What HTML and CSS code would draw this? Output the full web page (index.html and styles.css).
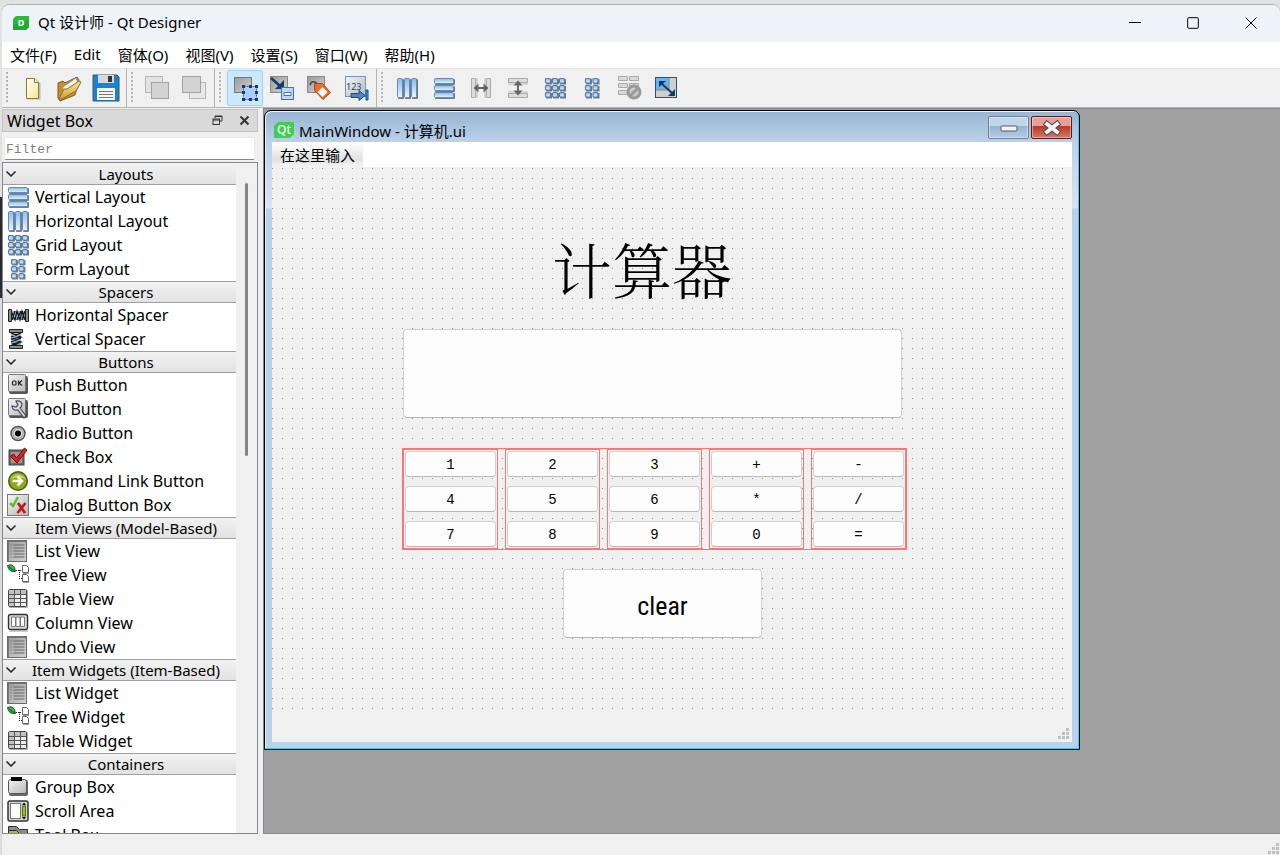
FILE: index.html
```html
<!DOCTYPE html>
<html lang="zh-CN">
<head>
  <meta charset="UTF-8" />
  <meta name="viewport" content="width=device-width, initial-scale=1.0" />
  <title>Qt 设计师 - Qt Designer</title>
  <link rel="stylesheet" href="styles.css">
</head>
<body>

<svg class="defs" aria-hidden="true">
  <defs>
    <linearGradient id="blue" x1="0" y1="0" x2="0" y2="1">
      <stop offset="0" stop-color="#7cc0ee" /><stop offset="1" stop-color="#e6f5ff" />
    </linearGradient>
    <linearGradient id="grey" x1="0" y1="0" x2="1" y2="1">
      <stop offset="0" stop-color="#9a9a9a" /><stop offset="1" stop-color="#d2d2d2" />
    </linearGradient>
    <linearGradient id="light" x1="0" y1="0" x2="1" y2="1">
      <stop offset="0" stop-color="#f4f4f4" /><stop offset="1" stop-color="#b8b8b8" />
    </linearGradient>
    <linearGradient id="paper" x1="0" y1="0" x2="1" y2="1">
      <stop offset="0" stop-color="#ffffff" /><stop offset="1" stop-color="#f7e889" />
    </linearGradient>
    <linearGradient id="gold" x1="0" y1="0" x2="0" y2="1">
      <stop offset="0" stop-color="#f7e3a0" /><stop offset="1" stop-color="#d39a2c" />
    </linearGradient>

    <symbol id="i-vbox" viewBox="0 0 22 22">
      <g fill="#3c4656" opacity=".7"><rect x="2" y="2" width="20" height="6" rx="1" /><rect x="2" y="9" width="20" height="6" rx="1" /><rect x="2" y="16" width="20" height="6" rx="1" /></g>
      <g fill="url(#blue)" stroke="#6d87ad"><rect x="1.500" y="1.500" width="19" height="5" rx="1" /><rect x="1.500" y="8.500" width="19" height="5" rx="1" /><rect x="1.500" y="15.500" width="19" height="5" rx="1" /></g>
    </symbol>
    <symbol id="i-hbox" viewBox="0 0 22 22">
      <g fill="#3c4656" opacity=".7"><rect x="2" y="2" width="6" height="20" rx="1" /><rect x="9" y="2" width="6" height="20" rx="1" /><rect x="16" y="2" width="6" height="20" rx="1" /></g>
      <g fill="url(#blue)" stroke="#6d87ad"><rect x="1.500" y="1.500" width="5" height="19" rx="1" /><rect x="8.500" y="1.500" width="5" height="19" rx="1" /><rect x="15.500" y="1.500" width="5" height="19" rx="1" /></g>
    </symbol>
    <symbol id="i-grid" viewBox="0 0 22 22">
      <path d="M2 2h6v5.500H2zM9 2h6v5.500H9zM16 2h6v5.500h-6zM2 9h6v5.500H2zM9 9h6v5.500H9zM16 9h6v5.500h-6zM2 16h6v5.500H2zM9 16h6v5.500H9zM16 16h6v5.500h-6z" fill="#3c4656" opacity=".7" />
      <g fill="url(#blue)" stroke="#5f7aa3" stroke-width="1.200">
        <rect x="1.500" y="1.500" width="5" height="4.500" rx="1" /><rect x="8.500" y="1.500" width="5" height="4.500" rx="1" /><rect x="15.500" y="1.500" width="5" height="4.500" rx="1" />
        <rect x="1.500" y="8.500" width="5" height="4.500" rx="1" /><rect x="8.500" y="8.500" width="5" height="4.500" rx="1" /><rect x="15.500" y="8.500" width="5" height="4.500" rx="1" />
        <rect x="1.500" y="15.500" width="5" height="4.500" rx="1" /><rect x="8.500" y="15.500" width="5" height="4.500" rx="1" /><rect x="15.500" y="15.500" width="5" height="4.500" rx="1" />
      </g>
    </symbol>
    <symbol id="i-form" viewBox="0 0 22 22">
      <path d="M5 2h6v5.500H5zM12.500 2h6v5.500h-6zM5 9h6v5.500H5zM12.500 9h6v5.500h-6zM5 16h6v5.500H5zM12.500 16h6v5.500h-6z" fill="#3c4656" opacity=".7" />
      <g fill="url(#blue)" stroke="#5f7aa3" stroke-width="1.200">
        <rect x="4.500" y="1.500" width="5" height="4.500" rx="1" /><rect x="12" y="1.500" width="5" height="4.500" rx="1" />
        <rect x="4.500" y="8.500" width="5" height="4.500" rx="1" /><rect x="12" y="8.500" width="5" height="4.500" rx="1" />
        <rect x="4.500" y="15.500" width="5" height="4.500" rx="1" /><rect x="12" y="15.500" width="5" height="4.500" rx="1" />
      </g>
    </symbol>
    <symbol id="i-list" viewBox="0 0 22 22">
      <rect x="0.500" y="0.500" width="19" height="21" fill="url(#grey)" stroke="#6a6a6a" />
      <path d="M1 1.500h18M1.500 1v20" stroke="#777" />
      <path d="M3.500 5h1M3.500 8h1M3.500 11h1M3.500 14h1M3.500 17h1M6.500 5h11M6.500 8h11M6.500 11h11M6.500 14h11M6.500 17h11" stroke="#666" />
    </symbol>
    <symbol id="i-tree" viewBox="0 0 22 22">
      <path d="M0.500 1.500q5-2 7 2l1 4q-7 1-8-6z" fill="#35b04a" stroke="#145c22" />
      <path d="M2 3l6 4.500" stroke="#145c22" />
      <path d="M9 6.500h6M12.500 6v9M12 14.500h4" stroke="#222" stroke-dasharray="1 1" fill="none" />
      <path d="M15.500 1.500h4l2 2v5h-6zM15.500 10.500h4l2 2v5h-6z" fill="#fff" stroke="#666" />
      <path d="M16 9.500h6M16 18.500h6" stroke="#999" />
    </symbol>
    <symbol id="i-table" viewBox="0 0 22 22">
      <rect x="2" y="2" width="19" height="18" rx="1" fill="#777" opacity=".6" />
      <rect x="1.500" y="1.500" width="18" height="17" rx="1" fill="#eeeeee" stroke="#444" />
      <path d="M2 2h17v4H2zM2 6h5v12H2z" fill="#c2c2c2" />
      <path d="M2 6.500h17M2 10.500h17M2 14.500h17M7.500 2v16M13.500 2v16" stroke="#555" />
    </symbol>
    <symbol id="i-column" viewBox="0 0 22 22">
      <rect x="1.500" y="2.500" width="19" height="15" rx="2" fill="#dedede" stroke="#333" stroke-width="1.400" />
      <path d="M4.500 5h4v9.500h-4zM9 5h4v9.500H9zM13.500 5h4v9.500h-4z" fill="#fff" stroke="#777" />
      <path d="M2 19h19" stroke="#999" />
    </symbol>
    <symbol id="i-hspacer" viewBox="0 0 22 22">
      <path d="M4 7h14v9H4z" fill="#8fb0b8" />
      <path d="M4 7l4 9 2-9 3 9 2-9 3 9M5 16l3-9M10 16l4-9M15 16l3-9" fill="none" stroke="#10181c" stroke-width="1.200" />
      <path d="M1.500 5.500h3v12h-3zM18.500 5.500h3v12h-3z" fill="#8c8c8c" stroke="#222" />
    </symbol>
    <symbol id="i-vspacer" viewBox="0 0 22 22">
      <path d="M4 4h10v14H4z" fill="#8fb0b8" />
      <path d="M4 5l10 4-10 2 10 3-9 2 9 2M14 5L4 9M14 10l-10 4M14 14l-10 4" fill="none" stroke="#10181c" stroke-width="1.200" />
      <path d="M2.500 1.500h13v3h-13zM2.500 17.500h13v3h-13z" fill="#8c8c8c" stroke="#222" />
    </symbol>
    <symbol id="i-push" viewBox="0 0 22 22">
      <rect x="2" y="2" width="19" height="18" rx="2" fill="#555" />
      <rect x="1.500" y="0.500" width="17" height="17" rx="1" fill="url(#light)" stroke="#777" />
      <g fill="none" stroke="#222" stroke-width="1.200"><rect x="5.500" y="7" width="3.500" height="4" rx="1" /><path d="M11.500 6.500v5M15 6.500l-3 2.500 3 2.500" /></g>
    </symbol>
    <symbol id="i-tool" viewBox="0 0 22 22">
      <rect x="2" y="2" width="19" height="18" rx="2" fill="#555" />
      <rect x="1.500" y="0.500" width="17" height="17" rx="1" fill="url(#light)" stroke="#777" />
      <path d="M9 3q5-1 6 3 0 3-2 4l6 8-2 2-6-8q-6 1-6-4l4 1 2-2z" fill="#d9dce2" stroke="#444c5a" stroke-width="1.200" />
    </symbol>
    <symbol id="i-radio" viewBox="0 0 22 22">
      <circle cx="11" cy="11.500" r="7" fill="#c9c9c9" stroke="#555" stroke-width="1.500" />
      <circle cx="11" cy="11.500" r="5" fill="#ddd" stroke="#999" /><circle cx="11" cy="11.500" r="3" fill="#000" />
    </symbol>
    <symbol id="i-check" viewBox="0 0 22 22">
      <rect x="2" y="4" width="15" height="15" fill="#6a6a6a" stroke="#444" />
      <rect x="4" y="6" width="11" height="11" fill="#999" />
      <path d="M3.500 10.500l3-2.500 3 4 8-10 2.500 2-10 13z" fill="#e02020" stroke="#7a0808" />
    </symbol>
    <symbol id="i-command" viewBox="0 0 22 22">
      <circle cx="11" cy="11" r="9.300" fill="#8aac18" stroke="#4c5f10" stroke-width="1.500" />
      <path d="M3.500 9a8 7 0 0115 0q-7-3-15 0z" fill="#bcd260" />
      <path d="M5.500 11h9M10.500 6.500l4.500 4.500-4.500 4.500" fill="none" stroke="#fff" stroke-width="2.500" />
    </symbol>
    <symbol id="i-dialog" viewBox="0 0 22 22">
      <rect x="0.500" y="0.500" width="21" height="21" fill="url(#light)" stroke="#777" />
      <path d="M3 9l3 3 5-9" fill="none" stroke="#5fbf2c" stroke-width="2.500" />
      <path d="M11 9l7 10M18.500 9l-8 10" stroke="#c4161c" stroke-width="2.700" />
    </symbol>
    <symbol id="i-group" viewBox="0 0 22 22">
      <rect x="2" y="4" width="19" height="16" rx="2" fill="#666" />
      <rect x="1.500" y="3.500" width="18" height="14" rx="2" fill="url(#light)" stroke="#555" />
      <rect x="4" y="1" width="11" height="4" fill="#000" />
    </symbol>
    <symbol id="i-scroll" viewBox="0 0 22 22">
      <rect x="1" y="1" width="20" height="20" rx="2" fill="#d7d7d7" stroke="#333" stroke-width="1.500" />
      <rect x="3.500" y="3.500" width="10" height="15" fill="#fff" stroke="#777" />
      <rect x="15.500" y="6" width="3" height="10" fill="#a2c520" stroke="#54680c" />
      <path d="M17 2.500l2 2.500h-4zM17 19.500l2-2.500h-4z" />
    </symbol>
    <symbol id="i-toolbox" viewBox="0 0 22 22">
      <path d="M1.500 2.500h8l3 3h8v5h-19z" fill="#8b8b8b" stroke="#333" />
      <path d="M1.500 6.500h8l3 3h8v5h-19z" fill="#a2b45e" stroke="#333" />
    </symbol>
  </defs>
</svg>

<div class="window">
  <header class="titlebar">
    <svg class="logo" viewBox="0 0 16 14"><path d="M3 0h13v11l-3 3H0V3z" fill="#2cb940" /><path d="M0 9l16-5v7l-3 3H0z" fill="#1ea834" /><text x="8" y="10" text-anchor="middle">D</text></svg>
    <h1>Qt 设计师 - Qt Designer</h1>
    <div class="win-buttons">
      <button aria-label="Minimize"><svg viewBox="0 0 12 12"><path d="M0 5.500h12" /></svg></button>
      <button aria-label="Maximize"><svg viewBox="0 0 12 12"><rect x="0.700" y="0.700" width="10.600" height="10.600" rx="1" /></svg></button>
      <button aria-label="Close"><svg viewBox="0 0 12 12"><path d="M0.500 0.500l11 11M11.500 0.500l-11 11" /></svg></button>
    </div>
  </header>

  <nav class="menubar">
    <button>文件(F)</button>
    <button>Edit</button>
    <button>窗体(O)</button>
    <button>视图(V)</button>
    <button>设置(S)</button>
    <button>窗口(W)</button>
    <button>帮助(H)</button>
  </nav>

  <div class="toolbars">
    <div class="toolbar">
      <span class="handle"></span>
      <button aria-label="New"><svg viewBox="0 0 28 28"><path d="M9.500 5.500h9l4 4v16h-13z" fill="#888" opacity=".5" /><path d="M8.500 4.500h8l4 4v16h-12z" fill="url(#paper)" stroke="#8c7a3c" /><path d="M16.500 4.500v4h4" fill="#fff" stroke="#8c7a3c" /></svg></button>
      <button aria-label="Open"><svg viewBox="0 0 28 28"><path d="M3 9l5-2 2 2 12-6 2 3-4 15-15 6-2-3z" fill="#c58f2d" stroke="#7d5d1f" /><path d="M8 13L21 4l2 5-15 9z" fill="#f8f8f0" stroke="#a0a08c" /><path d="M4 25l5-10 3 0 12-8 2 1-5 9L5 26z" fill="url(#gold)" stroke="#8d6a23" /></svg></button>
      <button aria-label="Save"><svg viewBox="0 0 28 28"><path d="M1 1h24l2 2v24H1z" fill="#1583d6" stroke="#46545f" /><rect x="6" y="1" width="16" height="8" fill="#d5d9dd" /><rect x="16" y="2" width="4" height="6" fill="#333" /><rect x="5" y="14" width="18" height="12" fill="#f5f5f5" /><path d="M7 17.500h14M7 20.500h14M7 23.500h14" stroke="#777" /></svg></button>
    </div>
    <div class="toolbar">
      <span class="handle"></span>
      <button aria-label="Send to Back" disabled><svg viewBox="0 0 28 28"><rect x="2.500" y="2.500" width="17" height="16" fill="#e2e2e2" stroke="#b5b5b5" /><rect x="8.500" y="8.500" width="17" height="16" fill="#d3d3d3" stroke="#a2a2a2" /></svg></button>
      <button aria-label="Bring to Front" disabled><svg viewBox="0 0 28 28"><rect x="9.500" y="8.500" width="16" height="16" fill="#e8e8e8" stroke="#b5b5b5" /><rect x="2.500" y="2.500" width="18" height="16" fill="#d3d3d3" stroke="#a2a2a2" /></svg></button>
    </div>
    <div class="toolbar">
      <span class="handle"></span>
      <button class="active" aria-label="Edit Widgets"><svg viewBox="0 0 28 28"><rect x="3.500" y="3.500" width="17" height="15" fill="url(#grey)" stroke="#777" /><rect x="12.500" y="12.500" width="13" height="13" fill="#a9cdff" stroke="#32639b" stroke-dasharray="2 1" /><path d="M11 11h3v3h-3zM18 11h3v3h-3zM24 11h3v3h-3zM11 17h3v3h-3zM24 17h3v3h-3zM11 24h3v3h-3zM18 24h3v3h-3zM24 24h3v3h-3z" fill="#1c3768" /></svg></button>
      <button aria-label="Edit Signals/Slots"><svg viewBox="0 0 28 28"><rect x="2.500" y="2.500" width="17" height="16" fill="url(#grey)" stroke="#888" /><path d="M3 4l9 8" stroke="#143b63" stroke-width="2.500" /><path d="M16 6v9H7z" fill="#143b63" /><rect x="13.500" y="13.500" width="12" height="12" fill="#bcd7ff" stroke="#4a6db0" /><path d="M16 18.500h7v3h-7z" fill="#fff" stroke="#4a6db0" /></svg></button>
      <button aria-label="Edit Buddies"><svg viewBox="0 0 28 28"><rect x="2.500" y="2.500" width="17" height="16" fill="url(#grey)" stroke="#888" /><path d="M5 11q2-6 8-1" fill="none" stroke="#444" stroke-width="1.500" /><path d="M9.500 9.500l8 0 8 9-7.500 7-8.500-9z" fill="#f06a22" stroke="#a84a10" /><path d="M17.500 13l5 5-5 5-5-5z" fill="#fff" /></svg></button>
      <button aria-label="Edit Tab Order"><svg viewBox="0 0 28 28"><rect x="3.500" y="2.500" width="20" height="20" fill="url(#light)" stroke="#7794b8" /><text class="tab-num" x="4" y="16">123</text><path d="M9 19.500h8v-3l6 5-6 5v-3H9z" fill="#4a86c8" stroke="#1a4a8a" /><path d="M24 16h2v10h-2z" fill="#5c93cf" stroke="#1a4a8a" /></svg></button>
    </div>
    <div class="toolbar last">
      <span class="handle"></span>
      <button aria-label="Lay Out Horizontally"><svg class="mid"><use href="#i-hbox" /></svg></button>
      <button aria-label="Lay Out Vertically"><svg class="mid"><use href="#i-vbox" /></svg></button>
      <button aria-label="Lay Out Horizontally in Splitter" disabled><svg class="mid" viewBox="0 0 22 22"><path d="M1.500 1.500h4v19h-4zM16.500 1.500h4v19h-4z" fill="#ddd" stroke="#aaa" /><path d="M7 1v20M15 1v20" stroke="#bbb" /><path d="M3.500 11l5-4.500v3.500h5V6.500l5 4.500-5 4.500V12h-5v3.500z" fill="#666" /></svg></button>
      <button aria-label="Lay Out Vertically in Splitter" disabled><svg class="mid" viewBox="0 0 22 22"><path d="M1.500 1.500h19v4h-19zM1.500 16.500h19v4h-19z" fill="#ddd" stroke="#aaa" /><path d="M1 7h20M1 15h20" stroke="#bbb" /><path d="M11 3.500l4.500 5H12v5h3.500l-4.500 5-4.500-5H10v-5H6.500z" fill="#666" /></svg></button>
      <button aria-label="Lay Out in a Grid"><svg class="mid"><use href="#i-grid" /></svg></button>
      <button aria-label="Lay Out in a Form Layout"><svg class="mid"><use href="#i-form" /></svg></button>
      <button aria-label="Break Layout" disabled><svg viewBox="0 0 28 28"><path d="M3.500 2.500h9v4h-9zM14.500 2.500h9v4h-9zM3.500 9.500h9v4h-9zM14.500 9.500h9v4h-9zM3.500 16.500h9v4h-9z" fill="#d9d9d9" stroke="#aaa" /><circle cx="19" cy="18" r="6" fill="#c9c9c9" stroke="#999" stroke-width="3" /><path d="M15 22l8-8" stroke="#999" stroke-width="3" /></svg></button>
      <button aria-label="Adjust Size"><svg class="mid" viewBox="0 0 22 22"><rect x="0.500" y="0.500" width="21" height="20" fill="#cfcfcf" stroke="#1f5687" /><path d="M1 1h13v12H1z" fill="#69b4ea" /><path d="M14 1v12H1" fill="none" stroke="#8a8a8a" /><path d="M6 6l11 10" stroke="#0d3d66" stroke-width="2" /><path d="M4 4h7l-7 6zM20 19h-7l7-7z" fill="#0d3d66" /></svg></button>
    </div>
  </div>

  <main class="workspace">
    <aside class="dock">
      <div class="dock-title">
        <h2>Widget Box</h2>
        <button aria-label="Float"><svg viewBox="0 0 11 11"><path d="M3 3V1h7v5H8" /><rect x="1" y="4" width="6.500" height="5.500" /><path d="M3 1.500h7M1 5h6.500" /></svg></button>
        <button aria-label="Close dock"><svg viewBox="0 0 11 11"><path class="thick" d="M1.500 1.500l8 8M9.500 1.500l-8 8" /></svg></button>
      </div>
      <input class="filter" type="text" placeholder="Filter" aria-label="Filter">
      <div class="widget-box">
        <div class="widget-list">
          <h3><svg viewBox="0 0 10 6"><path d="M0.500 0.500L5 5l4.500-4.500" /></svg>Layouts</h3>
          <ul>
            <li><svg><use href="#i-vbox" /></svg>Vertical Layout</li>
            <li><svg><use href="#i-hbox" /></svg>Horizontal Layout</li>
            <li><svg><use href="#i-grid" /></svg>Grid Layout</li>
            <li><svg><use href="#i-form" /></svg>Form Layout</li>
          </ul>
          <h3><svg viewBox="0 0 10 6"><path d="M0.500 0.500L5 5l4.500-4.500" /></svg>Spacers</h3>
          <ul>
            <li><svg><use href="#i-hspacer" /></svg>Horizontal Spacer</li>
            <li><svg><use href="#i-vspacer" /></svg>Vertical Spacer</li>
          </ul>
          <h3><svg viewBox="0 0 10 6"><path d="M0.500 0.500L5 5l4.500-4.500" /></svg>Buttons</h3>
          <ul>
            <li><svg><use href="#i-push" /></svg>Push Button</li>
            <li><svg><use href="#i-tool" /></svg>Tool Button</li>
            <li><svg><use href="#i-radio" /></svg>Radio Button</li>
            <li><svg><use href="#i-check" /></svg>Check Box</li>
            <li><svg><use href="#i-command" /></svg>Command Link Button</li>
            <li><svg><use href="#i-dialog" /></svg>Dialog Button Box</li>
          </ul>
          <h3><svg viewBox="0 0 10 6"><path d="M0.500 0.500L5 5l4.500-4.500" /></svg>Item Views (Model-Based)</h3>
          <ul>
            <li><svg><use href="#i-list" /></svg>List View</li>
            <li><svg><use href="#i-tree" /></svg>Tree View</li>
            <li><svg><use href="#i-table" /></svg>Table View</li>
            <li><svg><use href="#i-column" /></svg>Column View</li>
            <li><svg><use href="#i-list" /></svg>Undo View</li>
          </ul>
          <h3><svg viewBox="0 0 10 6"><path d="M0.500 0.500L5 5l4.500-4.500" /></svg>Item Widgets (Item-Based)</h3>
          <ul>
            <li><svg><use href="#i-list" /></svg>List Widget</li>
            <li><svg><use href="#i-tree" /></svg>Tree Widget</li>
            <li><svg><use href="#i-table" /></svg>Table Widget</li>
          </ul>
          <h3><svg viewBox="0 0 10 6"><path d="M0.500 0.500L5 5l4.500-4.500" /></svg>Containers</h3>
          <ul>
            <li><svg><use href="#i-group" /></svg>Group Box</li>
            <li><svg><use href="#i-scroll" /></svg>Scroll Area</li>
            <li><svg><use href="#i-toolbox" /></svg>Tool Box</li>
          </ul>
        </div>
        <div class="scrollbar"><span></span></div>
      </div>
    </aside>

    <section class="mdi">
      <div class="form-window">
        <div class="form-title">
          <svg class="qt" viewBox="0 0 20 16"><path d="M4 0h16v12l-4 4H0V4z" fill="#41cd52" /><text x="10" y="12" text-anchor="middle">Qt</text></svg>
          <h2>MainWindow - 计算机.ui</h2>
          <button class="min" aria-label="Minimize form"><svg viewBox="0 0 18 8"><rect x="1" y="1" width="16" height="5" rx="1" fill="#f4f4f4" stroke="#555b69" /></svg></button>
          <button class="close" aria-label="Close form"><svg viewBox="0 0 18 16"><path d="M4 4l10 8M14 4l-10 8" stroke="#4a4a58" stroke-width="6" stroke-linecap="square" /><path d="M4 4l10 8M14 4l-10 8" stroke="#f2f2f2" stroke-width="4" stroke-linecap="square" /></svg></button>
        </div>
        <div class="form-body">
          <div class="form-menu"><button>在这里输入</button></div>
          <div class="canvas">
            <label class="heading" for="display">计算器</label>
            <input class="display" id="display" type="text">
            <div class="keypad">
              <div class="keys"><button>1</button><button>4</button><button>7</button></div>
              <div class="keys"><button>2</button><button>5</button><button>8</button></div>
              <div class="keys"><button>3</button><button>6</button><button>9</button></div>
              <div class="keys"><button>+</button><button>*</button><button>0</button></div>
              <div class="keys"><button>-</button><button>/</button><button>=</button></div>
            </div>
            <button class="clear">clear</button>
          </div>
          <div class="form-status"><svg class="grip" viewBox="0 0 12 12"><path d="M8 0h3v3H8zM4 4h3v3H4zM8 4h3v3H8zM0 8h3v3H0zM4 8h3v3H4zM8 8h3v3H8z" /></svg></div>
        </div>
      </div>
    </section>
  </main>

  <footer class="statusbar"><svg class="grip" viewBox="0 0 12 12"><path d="M8 0h3v3H8zM4 4h3v3H4zM8 4h3v3H8zM0 8h3v3H0zM4 8h3v3H4zM8 8h3v3H8z" /></svg></footer>
</div>

</body>
</html>
```
FILE: styles.css
```css
* {
  box-sizing: border-box;
}
body {
  margin: 0;
  height: 100vh;
  padding: 4px 0 0 2px;
  overflow: hidden;
  display: flex;
  background: linear-gradient(#e2e2e2 197px, #2b2b30 197px 298px, #dcdcdc 298px);
  color: #000;
  font-family: "Noto Sans", "Noto Sans CJK SC", sans-serif;
  font-size: 15px;
}
h1, h2, h3, ul {
  margin: 0;
  padding: 0;
  font-size: 15px;
  font-weight: normal;
}
button {
  border: none;
  background: none;
  padding: 0;
  color: inherit;
  font: inherit;
}
svg {
  display: block;
  flex: none;
}
.defs {
  position: absolute;
  width: 0;
  height: 0;
}
.window {
  flex: 1;
  min-width: 0;
  display: flex;
  flex-direction: column;
  border-top: 1px solid #b0b0b0;
  border-radius: 8px 8px 0 0;
  background: #f0f0f0;
  overflow: hidden;
}

.titlebar {
  display: flex;
  align-items: center;
  height: 37px;
  padding: 0 0 2px 11px;
  background: #eef3fa;
}
.logo {
  width: 16px;
  height: 14px;
}
.logo text {
  font-size: 9px;
  font-weight: bold;
  fill: #fff;
}
.titlebar h1 {
  flex: 1;
  padding: 0 0 2px 9px;
}
.win-buttons {
  display: flex;
}
.win-buttons button {
  width: 58px;
  height: 35px;
  display: flex;
  align-items: center;
  justify-content: center;
}
.win-buttons svg {
  width: 12px;
  height: 12px;
  fill: none;
  stroke: #000;
}

.menubar {
  display: flex;
  gap: 17px;
  height: 26px;
  padding: 0 0 2px 8px;
  background: #fff;
}

.toolbars {
  display: flex;
  height: 40px;
  border-top: 1px solid #e2e2e2;
  border-bottom: 1px solid #b4b4b4;
}
.toolbar {
  display: flex;
  align-items: center;
  gap: 1px;
  padding: 0 2px 0 4px;
  border-right: 1px solid #b4b4b4;
}
.toolbar.last {
  border-right: none;
}
.toolbar button {
  width: 36px;
  height: 36px;
  display: flex;
  align-items: center;
  justify-content: center;
}
.toolbar .active {
  background: #cce8ff;
  border: 1px solid #99d1ff;
  border-radius: 2px;
}
.toolbar svg {
  width: 28px;
  height: 28px;
}
.toolbar .mid {
  width: 22px;
  height: 22px;
}
.tab-num {
  font-size: 9px;
  fill: #0d4a8c;
}
.handle {
  width: 2px;
  height: 32px;
  margin-right: 5px;
  background: repeating-linear-gradient(#b4b4b4 0 2px, transparent 2px 4px);
}

.workspace {
  flex: 1;
  min-height: 0;
  display: flex;
}
.dock {
  width: 256px;
  display: flex;
  flex-direction: column;
  padding-top: 1px;
}
.dock-title {
  display: flex;
  align-items: center;
  gap: 16px;
  height: 23px;
  padding: 0 7px 0 4px;
  border: 1px solid #c2c2c2;
  background: #d9d9d9;
}
.dock-title h2 {
  flex: 1;
  font-size: 16px;
  line-height: 20px;
}
.dock-title svg {
  width: 11px;
  height: 11px;
  fill: none;
  stroke: #333;
}
.dock-title .thick {
  stroke-width: 2;
}
.filter {
  height: 23px;
  margin: 5px 3px 2px 2px;
  padding: 1px 1px 0;
  border: 1px solid #eaeaea;
  border-bottom-color: #868686;
  border-radius: 2px;
  background: #fff;
  font: 13px "Liberation Mono", monospace;
}
.filter::placeholder {
  color: #808080;
}
.widget-box {
  flex: 1;
  min-height: 0;
  display: flex;
  border: 1px solid #828790;
}
.widget-list {
  flex: 1;
  overflow: hidden;
  background: #fff;
}
.widget-list h3 {
  position: relative;
  height: 22px;
  padding-left: 13px;
  border-top: 1px solid #a0a0a0;
  border-bottom: 1px solid #a0a0a0;
  background: linear-gradient(#f2f2f2, #e2e2e2);
  line-height: 20px;
  text-align: center;
}
.widget-list h3:first-child {
  border-top-color: #f2f2f2;
}
.widget-list h3 svg {
  position: absolute;
  left: 3px;
  top: 7px;
  width: 10px;
  height: 6px;
  fill: none;
  stroke: #222;
  stroke-width: 1.5;
}
.widget-list li {
  display: flex;
  align-items: center;
  gap: 6px;
  height: 24px;
  padding-left: 4px;
  font-size: 16px;
}
.widget-list li svg {
  width: 22px;
  height: 22px;
}
.scrollbar {
  width: 21px;
  padding: 20px 9px;
}
.scrollbar span {
  display: block;
  width: 3px;
  height: 273px;
  border-radius: 2px;
  background: #858585;
}

.mdi {
  flex: 1;
  position: relative;
  margin-left: 5px;
  border: 1px solid #828790;
  border-right: none;
  background: #a0a0a0;
}
.form-window {
  position: absolute;
  left: 0;
  top: 1px;
  width: 816px;
  height: 640px;
  display: flex;
  flex-direction: column;
  padding: 0 7px 7px;
  border: 1px solid #000;
  border-radius: 7px 7px 0 0;
  background: linear-gradient(#99b4d1, #b9d1ea 30px, #d7e4f2 97px, #b9d1ea 98px);
  box-shadow: inset -1px -1px #3bcbe5, inset 1px 1px #e8f2fc;
}
.form-title {
  display: flex;
  align-items: center;
  gap: 2px;
  height: 31px;
  padding: 2px 0 0 2px;
}
.form-title h2 {
  flex: 1;
  padding: 5px 0 0 3px;
}
.qt {
  width: 20px;
  height: 16px;
  margin-top: 5px;
}
.qt text {
  font-size: 12px;
  font-weight: 500;
  fill: #fff;
}
.form-title button {
  width: 41px;
  height: 23px;
  display: flex;
  align-items: center;
  justify-content: center;
  border: 1px solid #6d7f9b;
  border-radius: 2px;
  box-shadow: inset 0 0 0 1px rgba(255, 255, 255, 0.4);
}
.form-title .min {
  background: linear-gradient(#c1d5ea 45%, #98b3d0 45%, #b5cde5);
}
.form-title .min svg {
  width: 18px;
  height: 8px;
  margin-top: 3px;
}
.form-title .close {
  border-color: #571c22;
  background: linear-gradient(#e5a197 45%, #bb3a28 45%, #d27a68);
}
.form-title .close svg {
  width: 18px;
  height: 16px;
}
.form-body {
  flex: 1;
  display: flex;
  flex-direction: column;
  background: #f0f0f0;
}
.form-menu {
  display: flex;
  height: 25px;
  background: #fff;
}
.form-menu button {
  padding: 0 8px;
  background: linear-gradient(#fff, #e2e2e2 70%, #f4f4f4);
}
.canvas {
  flex: 1;
  position: relative;
  background: conic-gradient(from 0deg at 1px 1px, transparent 270deg, #949494 270deg) 0 1px / 10px 10px;
}
.heading {
  position: absolute;
  left: 280px;
  top: 57px;
  font: 300 60px/88px "Noto Serif CJK SC", "Noto Sans CJK SC", serif;
}
.display {
  position: absolute;
  left: 131px;
  top: 162px;
  width: 499px;
  height: 89px;
}
.display, .keys button, .clear {
  border: 1px solid #d0d0d0;
  border-bottom-color: #b8b8b8;
  border-radius: 4px;
  background: #fdfdfd;
}
.keypad {
  position: absolute;
  left: 130px;
  top: 281px;
  width: 505px;
  display: grid;
  grid-template-columns: repeat(5, 1fr);
  gap: 7px;
  border: 1px solid #ff7373;
}
.keys {
  display: flex;
  flex-direction: column;
  gap: 9px;
  padding: 1px;
  border: 1px solid #ff7373;
}
.keys button {
  height: 26px;
  padding-top: 1px;
  font: 14px "Liberation Mono", monospace;
}
.clear {
  position: absolute;
  left: 291px;
  top: 402px;
  width: 199px;
  height: 69px;
  padding-top: 5px;
  font: 26px "Liberation Sans Narrow", "Roboto Condensed", "Open Sans Condensed", sans-serif;
}
.form-status {
  height: 32px;
  display: flex;
  justify-content: flex-end;
  align-items: flex-end;
  padding: 2px;
}
.grip {
  width: 12px;
  height: 12px;
  fill: #c0c0c0;
}

.statusbar {
  height: 21px;
  display: flex;
  justify-content: flex-end;
  align-items: flex-end;
}
```
